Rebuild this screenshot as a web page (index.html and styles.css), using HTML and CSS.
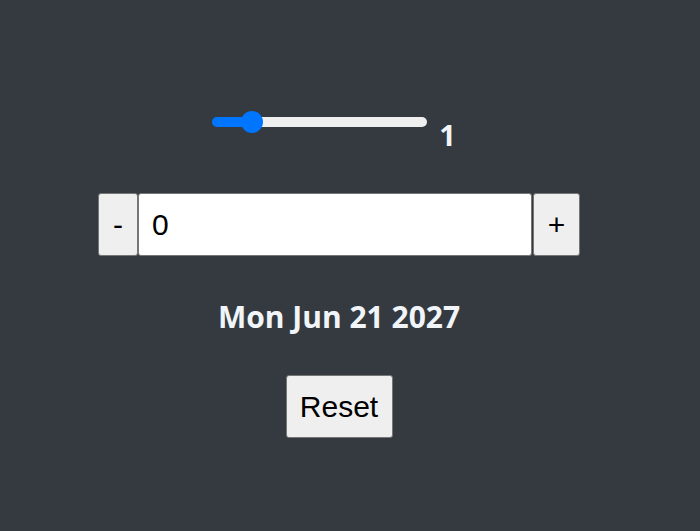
FILE: index.html
```html
<!DOCTYPE html>
<html lang="en">
<head>
<meta charset="utf-8">
<title>Counter</title>
<link rel="stylesheet" href="styles.css">
</head>
<body>
<div class="app">
  <div class="slider-row">
    <input class="range" type="range" min="0" max="6.65" step="any" value="1">
    <span class="range-value">1</span>
  </div>
  <div class="number-row">
    <button class="btn btn-minus">-</button>
    <input class="num" type="text" value="0">
    <button class="btn btn-plus">+</button>
  </div>
  <div class="date">Mon Jun 21 2027</div>
  <div class="reset-row">
    <button class="btn btn-reset">Reset</button>
  </div>
</div>
</body>
</html>
```

FILE: styles.css
```css
html, body {
  margin: 0;
  padding: 0;
  background: #343a40;
  height: 100%;
}

.app {
  padding: 111px 22px 0 0;
  display: flex;
  flex-direction: column;
  align-items: center;
}

.slider-row {
  display: flex;
  align-items: flex-start;
  justify-content: center;
  gap: 12px;
  padding-right: 10px;
  height: 44px;
}

.range {
  -webkit-appearance: none;
  appearance: none;
  width: 215px;
  height: 22px;
  margin: 0;
  padding: 0;
  background: transparent;
}

.range::-webkit-slider-runnable-track {
  height: 10px;
  border-radius: 5px;
  background: linear-gradient(to right, #0075ff 0, #0075ff 40px, #efefef 40px, #efefef 100%);
}

.range::-webkit-slider-thumb {
  -webkit-appearance: none;
  appearance: none;
  width: 22px;
  height: 22px;
  border-radius: 50%;
  background: #0075ff;
  border: none;
  margin-top: -6px;
}

.range-value {
  font-family: "Open Sans", sans-serif;
  font-weight: 700;
  font-size: 29px;
  line-height: 40px;
  color: #f1f5f9;
  margin-top: 4px;
}

.number-row {
  display: flex;
  margin-top: 38px;
  height: 63px;
}

.btn {
  font-family: "Liberation Sans", Arial, sans-serif;
  font-size: 30px;
  line-height: 34px;
  color: #000;
  background: #efefef;
  border: 1px solid #767676;
  border-radius: 3px;
  padding: 13px 14px;
  margin: 0;
  box-sizing: border-box;
  height: 63px;
}

.btn-minus {
  width: 40px;
  padding: 13px 0;
}

.btn-plus {
  width: 47px;
  padding: 13px 0;
  margin-left: 1px;
}

.num {
  width: 394px;
  height: 63px;
  box-sizing: border-box;
  margin: 0;
  border: 1px solid #767676;
  border-radius: 3px;
  padding: 0 13px;
  font-family: "Liberation Sans", Arial, sans-serif;
  font-size: 30px;
  color: #000;
  background: #fff;
  outline: none;
}

.date {
  margin-top: 40px;
  font-family: "Open Sans", sans-serif;
  font-weight: 700;
  font-size: 30px;
  line-height: 41px;
  color: #f1f5f9;
}

.reset-row {
  margin-top: 38px;
}

.btn-reset {
  width: 107px;
  padding: 13px 0;
}
```
